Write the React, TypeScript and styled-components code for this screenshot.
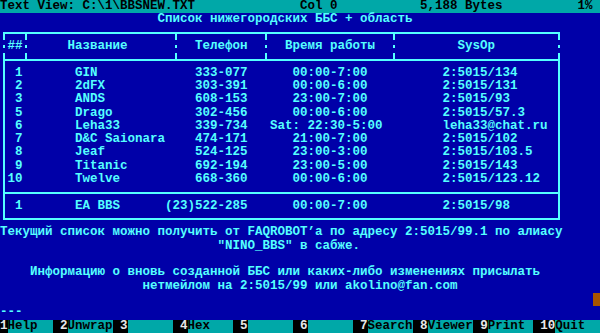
import React from "react";
import styled, { createGlobalStyle } from "styled-components";

const ROW = 13.32;
const CYAN = "#55ffff";
const BLUE = "#0000a8";
const TEAL = "#00a8a8";

const Global = createGlobalStyle`
  html, body { margin: 0; padding: 0; background: ${BLUE}; }
  * { box-sizing: border-box; }
`;

const Screen = styled.div`
  width: 600px;
  height: 333px;
  overflow: hidden;
  background: ${BLUE};
  color: ${CYAN};
  font-family: "Liberation Mono", "DejaVu Sans Mono", monospace;
  font-weight: bold;
  font-size: 12.5px;
  line-height: ${ROW}px;
  display: flex;
  flex-direction: column;
  white-space: pre;
`;

const StatusBar = styled.div`
  height: ${ROW}px;
  background: ${TEAL};
  color: #000;
  display: grid;
  grid-template-columns: 40ch 16ch 21ch 3ch;
`;

const Line = styled.div<{ $indent?: number }>`
  height: ${ROW}px;
  padding-left: ${(p) => p.$indent ?? 0}ch;
  display: flex;
`;

const BlockLine = styled(Line)`
  justify-content: flex-end;
`;

const Cursor = styled.span`
  width: 1ch;
  height: 100%;
  background: #a85400;
`;

const Frame = styled.div`
  margin: 5.4px 0 6px 3px;
  width: 557px;
  display: flex;
  flex-direction: column;
`;

const HeaderRow = styled.div`
  display: flex;
  height: 28.6px;
  border-top: 2px solid ${CYAN};
  border-bottom: 2px solid ${CYAN};
`;

const Divider = styled.span`
  width: 2px;
  flex: none;
  background: linear-gradient(
    to bottom,
    ${CYAN} 0 6px,
    transparent 6px 11px,
    ${CYAN} 11px 14px,
    transparent 14px 19px,
    ${CYAN} 19px
  );
`;

const HeaderCell = styled.span<{ $w?: number; $pad: number }>`
  ${(p) => (p.$w ? `width: ${p.$w}px; flex: none;` : "flex: 1;")}
  padding-left: ${(p) => p.$pad}px;
  display: flex;
  align-items: center;
`;

const Section = styled.div<{ $closed?: boolean }>`
  border-left: 2px solid ${CYAN};
  border-right: 2px solid ${CYAN};
  padding: 6px 0 5.3px;
  ${(p) =>
    p.$closed
      ? `border-top: 2px solid ${CYAN}; border-bottom: 2px solid ${CYAN};`
      : ""}
`;

const Row = styled.div`
  height: ${ROW}px;
  display: flex;
`;

const Num = styled.span`
  width: 17.5px;
  text-align: right;
`;

const Name = styled.span`
  margin-left: 7ch;
  width: 12ch;
`;

const Phone = styled.span`
  width: 11ch;
  text-align: right;
`;

const Time = styled.span<{ $wide?: boolean }>`
  margin-left: 3ch;
  width: 16ch;
  padding-left: ${(p) => (p.$wide ? 0 : 3)}ch;
`;

const SysOp = styled.span`
  margin-left: 7ch;
`;

const KeyBar = styled.div`
  height: ${ROW}px;
  background: #000;
  display: flex;
  gap: 1ch;
`;

const Key = styled.span`
  display: flex;
`;

const KeyNum = styled.span`
  color: #e8e8e8;
`;

const KeyLabel = styled.span`
  width: 6ch;
  background: ${TEAL};
  color: #000;
`;

type Bbs = { n: string; name: string; phone: string; time: string; sysop: string };

const rows: Bbs[] = [
  { n: "1", name: "GIN", phone: "333-077", time: "00:00-7:00", sysop: "2:5015/134" },
  { n: "2", name: "2dFX", phone: "303-391", time: "00:00-6:00", sysop: "2:5015/131" },
  { n: "3", name: "ANDS", phone: "608-153", time: "23:00-7:00", sysop: "2:5015/93" },
  { n: "5", name: "Drago", phone: "302-456", time: "00:00-6:00", sysop: "2:5015/57.3" },
  { n: "6", name: "Leha33", phone: "339-734", time: "Sat: 22:30-5:00", sysop: "leha33@chat.ru" },
  { n: "7", name: "D&C Saionara", phone: "474-171", time: "21:00-7:00", sysop: "2:5015/102" },
  { n: "8", name: "Jeaf", phone: "524-125", time: "23:00-3:00", sysop: "2:5015/103.5" },
  { n: "9", name: "Titanic", phone: "692-194", time: "23:00-5:00", sysop: "2:5015/143" },
  { n: "10", name: "Twelve", phone: "668-360", time: "00:00-6:00", sysop: "2:5015/123.12" },
];

const region: Bbs = {
  n: "1",
  name: "EA BBS",
  phone: "(23)522-285",
  time: "00:00-7:00",
  sysop: "2:5015/98",
};

const keys = [
  ["1", "Help"],
  ["2", "Unwrap"],
  ["3", ""],
  ["4", "Hex"],
  ["5", ""],
  ["6", ""],
  ["7", "Search"],
  ["8", "Viewer"],
  ["9", "Print"],
  ["10", "Quit"],
];

const BbsRow = ({ b }: { b: Bbs }) => (
  <Row>
    <Num>{b.n}</Num>
    <Name>{b.name}</Name>
    <Phone>{b.phone}</Phone>
    <Time $wide={b.time.length > 10}>{b.time}</Time>
    <SysOp>{b.sysop}</SysOp>
  </Row>
);

export default function App() {
  return (
    <>
      <Global />
      <Screen>
        <StatusBar>
          <span>Text View: C:\1\BBSNEW.TXT</span>
          <span>Col 0</span>
          <span>5,188 Bytes</span>
          <span>1%</span>
        </StatusBar>
        <Line $indent={21}>Список нижегородских ББС + область</Line>
        <Frame>
          <HeaderRow>
            <Divider />
            <HeaderCell $w={20} $pad={2.5}>##</HeaderCell>
            <Divider />
            <HeaderCell $w={148} $pad={40.5}>Название</HeaderCell>
            <Divider />
            <HeaderCell $w={88} $pad={18}>Телефон</HeaderCell>
            <Divider />
            <HeaderCell $w={125.5} $pad={18}>Время работы</HeaderCell>
            <Divider />
            <HeaderCell $pad={63}>SysOp</HeaderCell>
            <Divider />
          </HeaderRow>
          <Section>
            {rows.map((b) => (
              <BbsRow key={b.n} b={b} />
            ))}
          </Section>
          <Section $closed>
            <BbsRow b={region} />
          </Section>
        </Frame>
        <Line>Текущий список можно получить от FAQROBOT’а по адресу 2:5015/99.1 по алиасу</Line>
        <Line $indent={29}>"NINO_BBS" в сабже.</Line>
        <Line />
        <Line $indent={4}>Информацию о вновь созданной ББС или каких-либо изменениях присылать</Line>
        <Line $indent={19}>нетмейлом на 2:5015/99 или akolino@fan.com</Line>
        <BlockLine>
          <Cursor />
        </BlockLine>
        <Line>---</Line>
        <KeyBar>
          {keys.map(([n, label]) => (
            <Key key={n}>
              <KeyNum>{n}</KeyNum>
              <KeyLabel>{label}</KeyLabel>
            </Key>
          ))}
        </KeyBar>
      </Screen>
    </>
  );
}
